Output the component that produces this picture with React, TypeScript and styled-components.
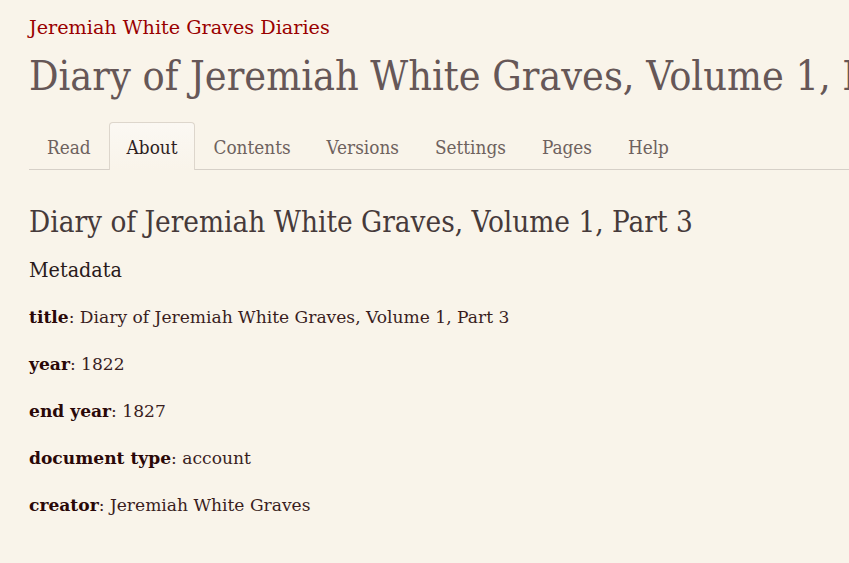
import React from "react";
import styled, { createGlobalStyle } from "styled-components";

const Global = createGlobalStyle`
  html, body { margin: 0; padding: 0; background: #f9f4ea; }
  body { font-family: "DejaVu Serif", serif; }
`;

const Page = styled.div`
  padding: 14px 0 0 29px;
  overflow: hidden;
  height: 563px;
  box-sizing: border-box;
`;

const Collection = styled.a`
  display: block;
  color: #990000;
  font-family: "DejaVu Serif", serif;
  font-size: 19.2px;
  line-height: 26px;
  text-decoration: none;
  padding-top: 1px;
`;

const Title = styled.h1`
  margin: 10px 0 0;
  color: #665757;
  font-family: "DejaVu Serif Condensed", "DejaVu Serif", serif;
  font-weight: normal;
  font-size: 41px;
  line-height: 50px;
  white-space: nowrap;
`;

const Tabs = styled.ul`
  display: flex;
  list-style: none;
  margin: 21px 0 0;
  padding: 0;
  border-bottom: 1px solid #d6d0c8;
`;

const Tab = styled.li<{ $active?: boolean }>`
  padding: 0 17px;
  height: 47px;
  line-height: 49px;
  font-family: "DejaVu Serif Condensed", "DejaVu Serif", serif;
  font-size: 18.8px;
  color: ${(p) => (p.$active ? "#2e1f1f" : "#6e625e")};
  border: 1px solid ${(p) => (p.$active ? "#ddd6cc" : "transparent")};
  border-bottom: none;
  border-radius: 4px 4px 0 0;
  margin-bottom: -1px;
  background: ${(p) => (p.$active ? "linear-gradient(#fbf8f3, #f9f4ea)" : "transparent")};
`;

const Heading = styled.h2`
  margin: 34px 0 0;
  color: #463a3a;
  font-family: "DejaVu Serif Condensed", "DejaVu Serif", serif;
  font-weight: normal;
  font-size: 29.4px;
  line-height: 36px;
`;

const SubHeading = styled.h3`
  margin: 16px 0 0;
  color: #2a1a1a;
  font-family: "DejaVu Serif Condensed", "DejaVu Serif", serif;
  font-weight: normal;
  font-size: 21.3px;
  line-height: 28px;
`;

const Field = styled.p`
  margin: 19px 0 0;
  color: #3a1e1e;
  font-family: "DejaVu Serif", serif;
  font-size: 17.1px;
  line-height: 28px;
`;

const Label = styled.strong`
  color: #2a0808;
  font-weight: bold;
`;

const fields: [string, string][] = [
  ["title", "Diary of Jeremiah White Graves, Volume 1, Part 3"],
  ["year", "1822"],
  ["end year", "1827"],
  ["document type", "account"],
  ["creator", "Jeremiah White Graves"],
];

const tabs = ["Read", "About", "Contents", "Versions", "Settings", "Pages", "Help"];

export default function App() {
  return (
    <>
      <Global />
      <Page>
        <Collection href="#">Jeremiah White Graves Diaries</Collection>
        <Title>Diary of Jeremiah White Graves, Volume 1, Part 3</Title>
        <Tabs>
          {tabs.map((t) => (
            <Tab key={t} $active={t === "About"}>{t}</Tab>
          ))}
        </Tabs>
        <Heading>Diary of Jeremiah White Graves, Volume 1, Part 3</Heading>
        <SubHeading>Metadata</SubHeading>
        {fields.map(([k, v]) => (
          <Field key={k}>
            <Label>{k}</Label>: {v}
          </Field>
        ))}
      </Page>
    </>
  );
}
